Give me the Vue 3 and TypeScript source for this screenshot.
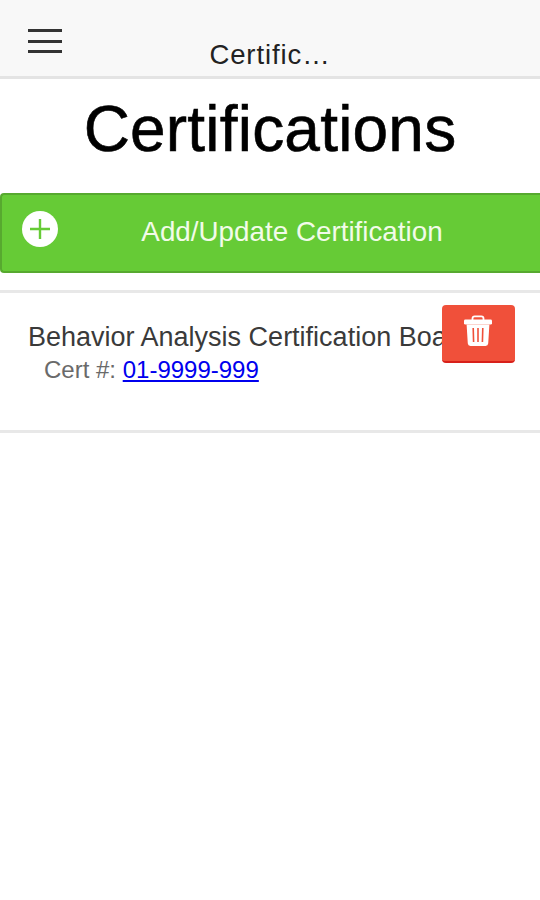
<template>
  <div class="page">
    <header class="bar">
      <button class="menu" aria-label="Menu">
        <span></span>
        <span></span>
        <span></span>
      </button>
      <div class="bar-title">Certific…</div>
    </header>

    <h1 class="title">Certifications</h1>

    <button class="add">
      <svg class="add-icon" width="36" height="36" viewBox="0 0 36 36">
        <circle cx="18" cy="18" r="18" fill="#fff" />
        <path d="M18 8v20M8 18h20" stroke="#66cb36" stroke-width="2.4" fill="none" />
      </svg>
      <span>Add/Update Certification</span>
    </button>

    <div class="item">
      <div class="item-name">Behavior Analysis Certification Board</div>
      <div class="item-cert">Cert #: <a class="cert-link" href="#">01-9999-999</a></div>
      <button class="del" aria-label="Delete">
        <svg width="30" height="32" viewBox="0 0 30 32">
          <path d="M9.5 5.5 V3.6 Q9.5 1.4 11.7 1.4 H18.3 Q20.5 1.4 20.5 3.6 V5.5" stroke="#fff" stroke-width="1.8" fill="none" />
          <rect x="1" y="4.6" width="28" height="5" rx="1.4" fill="#fff" />
          <path fill-rule="evenodd" fill="#fff" d="M3.6 9.4 H26.4 L25.2 28.6 Q25 31 22.6 31 H7.4 Q5 31 4.8 28.6 Z M9.4 13 L9.8 27 H11.4 L11 13 Z M14.2 13 V27 H15.8 V13 Z M19 13 L18.6 27 H20.2 L20.6 13 Z" />
        </svg>
      </button>
    </div>
  </div>
</template>

<script setup lang="ts">
</script>

<style>
html,
body {
  margin: 0;
  background: #fff;
}
</style>

<style scoped>
.page {
  width: 540px;
  height: 900px;
  overflow: hidden;
  background: #fff;
  font-family: "Liberation Sans", Arial, sans-serif;
}

.bar {
  height: 76px;
  background: #f8f8f8;
  border-bottom: 3px solid #e4e4e4;
  display: flex;
  position: relative;
}

.menu {
  border: 0;
  padding: 0;
  background: none;
  margin: 29px 0 0 28px;
  width: 34px;
  height: 24px;
  display: flex;
  flex-direction: column;
  justify-content: space-between;
}

.menu span {
  display: block;
  height: 3px;
  background: #333;
}

.bar-title {
  position: absolute;
  left: 0;
  right: 0;
  top: 39px;
  text-align: center;
  font-size: 27.5px;
  letter-spacing: 0.9px;
  line-height: 32px;
  color: #222;
}

.title {
  margin: 0;
  height: 114px;
  text-align: center;
  font-size: 64px;
  font-weight: 400;
  letter-spacing: 0.2px;
  line-height: 100px;
  color: #000;
  -webkit-text-stroke: 0.6px #000;
}

.add {
  width: 100%;
  height: 80px;
  box-sizing: border-box;
  display: flex;
  align-items: center;
  justify-content: center;
  position: relative;
  padding: 0 0 2px 42px;
  background: #66cb36;
  border: 2px solid #57a92f;
  border-right: 0;
  border-radius: 4px 0 0 4px;
  color: #f2fbe9;
  font-family: inherit;
  font-size: 27.8px;
  margin-bottom: 17px;
}

.add-icon {
  position: absolute;
  left: 20px;
  top: 16px;
}

.item {
  position: relative;
  border-top: 3px solid #e8e8e8;
  border-bottom: 3px solid #e8e8e8;
  padding: 28px 0 0 28px;
  height: 109px;
  overflow: hidden;
}

.item-name {
  font-size: 27px;
  line-height: 32px;
  color: #3a3a3a;
  white-space: nowrap;
}

.item-cert {
  font-size: 24px;
  line-height: 34px;
  color: #6a6a6a;
  padding-left: 16px;
}

.cert-link {
  color: #0000ee;
}

.del {
  position: absolute;
  left: 442px;
  top: 12px;
  width: 73px;
  height: 58px;
  padding: 0;
  box-sizing: border-box;
  background: #f0503a;
  border: 0;
  border-bottom: 2px solid #d8201a;
  border-radius: 4px;
  display: flex;
  align-items: center;
  justify-content: center;
}

.del svg {
  margin-left: -2px;
  margin-bottom: 4px;
}
</style>
